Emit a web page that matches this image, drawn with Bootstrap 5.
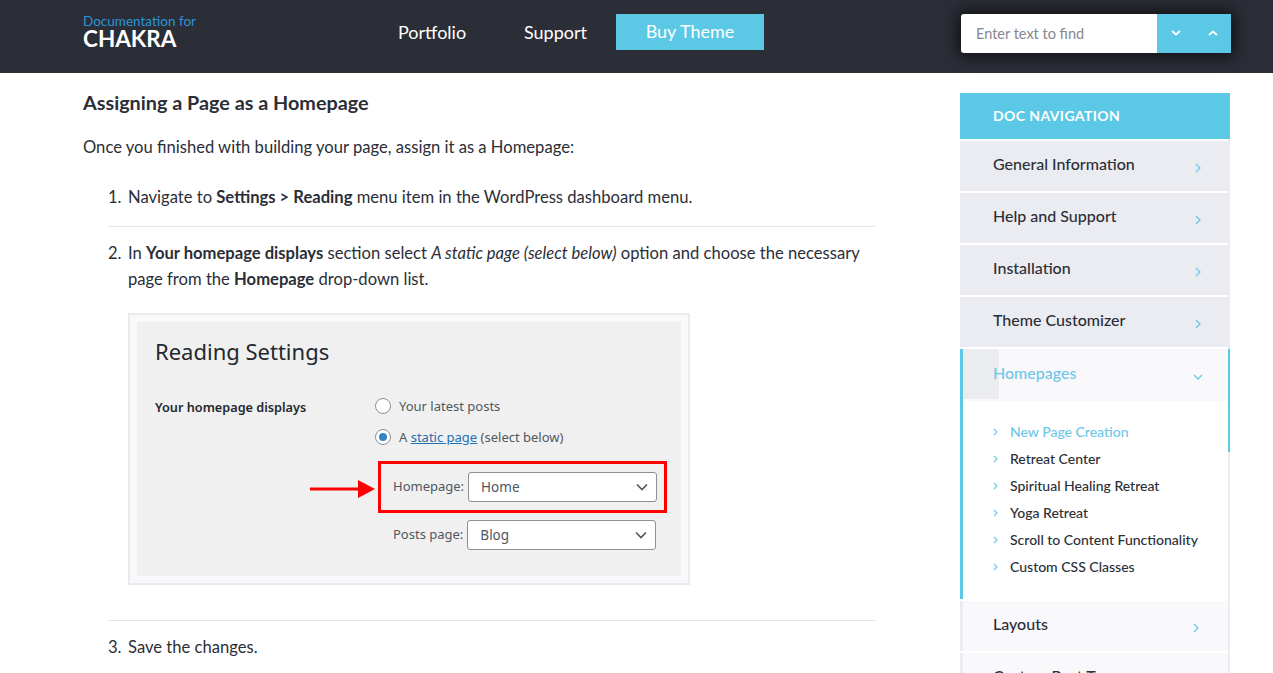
<!DOCTYPE html>
<html lang="en">
<head>
<meta charset="utf-8">
<title>Chakra Documentation</title>
<link href="https://cdn.jsdelivr.net/npm/bootstrap@5.3.0/dist/css/bootstrap.min.css" rel="stylesheet">
<style>
html,body{height:673px;overflow:hidden}
body{font-family:"Lato","Noto Sans",sans-serif;color:#2b2e37;background:#fff;font-size:16px}
.top-bar{height:73px;background:#2b2e37;flex-wrap:nowrap}
.top-inner{padding-left:83px;margin-top:-10px}
.brand-box{width:315px;line-height:1;margin-top:0}
.brand-small{color:#2b93d8;font-size:13.500px;line-height:13px;display:block}
.brand-big{color:#fff;font-size:22.500px;font-weight:700;line-height:21px;display:block}
.top-links{height:36px;width:366px}
.top-links .nav-link{color:#fff;font-size:18px;padding:0;line-height:32px}
.link-a{width:126px}
.link-b{width:92px}
.buy-btn{background:#5bc8e6;color:#fff;width:148px;height:36px;line-height:34px;font-size:18px;border:0;border-radius:0;padding:0}
.find-box{width:270px;height:39px;box-shadow:0 0 16px 3px rgba(0,0,0,.7);border-radius:3px 0 0 3px;margin-left:197px;margin-top:3px}
.find-box input{border:0;border-radius:3px 0 0 3px;height:39px;font-size:14.500px;padding:0 15px;color:#6c757d;width:196px;flex:none}
.find-box input::placeholder{color:#85878d}
.find-btn{background:#5bc8e6;width:37px;height:39px;border:0;border-radius:0;padding:0;display:flex;align-items:center;justify-content:center}
.page-wrap{padding:19px 43px 0 83px;gap:85px}
.doc-col{width:792px;flex:none}
.doc-col h4{font-size:19.800px;font-weight:700;line-height:20px;margin:0 0 25px;color:#2b2e37}
.doc-col p{font-size:16.600px;line-height:20px;margin:0 0 27px}
.step-list{padding-left:25px;list-style:none;margin:0}
.step-item{display:flex;font-size:16.600px;line-height:26px}
.step-num{width:20px;flex:none}
.step-rule{border-top:1px solid #e6e6ea;height:0}
.shot-frame{width:562px;height:272px;border:2px solid #ebebee;background:#f9f9fb;padding:7px;margin:21px 0 35px}
.shot-panel{background:#f0f0f1;height:254px;padding:13px 18px;color:#50575e;font-family:"Noto Sans",sans-serif;font-size:13px;position:relative}
.shot-title{font-size:22px;line-height:32px;color:#23282d;margin-bottom:30px}
.shot-label{width:220px;font-weight:600;font-size:12.700px;color:#23282d;line-height:20px;flex:none}
.shot-opts{margin-top:-1px}
.shot-opt{gap:8px;height:20px;line-height:20px;margin-bottom:11px}
.shot-radio{width:16px;height:16px;border:1px solid #8c8f94;border-radius:50%;background:#fff;display:flex;align-items:center;justify-content:center;flex:none}
.shot-dot{width:8px;height:8px;border-radius:50%;background:#3582c4}
.shot-link{color:#2271b1;text-decoration:underline}
.red-box{border:3px solid #f00;width:289px;height:52px;margin:14px 0 7px 3px;padding:8px 7px 0 12px;position:relative;gap:4px}
.red-arrow{position:absolute;left:-71px;top:16px}
.label-text{line-height:20px;white-space:nowrap;margin-top:4px}
.post-row{margin-left:18px;gap:4px;width:263px}
.fake-select{width:189px;height:30px;border:1px solid #8c8f94;border-radius:3px;background:#fff;padding:0 8px 0 12px;font-size:13.500px;line-height:31px;flex:none;justify-content:space-between;align-items:center}
.side-col{width:270px;flex:none;margin-top:1px}
.side-head{height:46px;background:#5bc8e6;color:#fff;font-weight:700;font-size:14px;letter-spacing:.4px;line-height:46px;padding-left:33px}
.side-nav{border-radius:0;gap:2px;padding-top:2px;border-right:2px solid #ececf1}
.side-nav .list-group-item{border:0;border-radius:0;background:#ebecf1;height:50px;padding:0 29px 0 33px;color:#2b2e37;font-size:16px;font-weight:500;line-height:48px}
.side-label{margin-top:-4px}
.side-arrow{margin-top:3px}
.side-top{border-right:2px solid #5bc8e6;margin-right:-2px}
.side-nav .plain-item{background:#f9f9fc;border-left:3px solid #ececf1;padding-left:30px}
.side-nav .open-item{background:#f9f9fc;height:52px;padding:0 25px 0 30px;color:#6ec6e8;position:relative}
.open-wrap{border-left:3px solid #5bc8e6;height:250px;background:#fff;position:relative}
.open-wrap::after{content:"";position:absolute;right:-2px;top:0;height:103px;border-right:2px solid #5bc8e6}
.open-tab{position:absolute;left:0;top:0;width:36px;height:50px;background:#ebecf0;z-index:1}
.open-text{position:relative;z-index:2}
.sub-list{padding:17px 0 0 30px;list-style:none;margin:0}
.sub-list li{height:27px;line-height:27px;font-size:14px;font-weight:500;color:#2b2e37;display:flex;align-items:center;gap:12px}
.sub-list li.now{color:#6ec6e8}
</style>
</head>
<body>
<nav class="navbar top-bar p-0">
  <div class="d-flex align-items-center w-100 top-inner">
    <a class="brand-box text-decoration-none" href="#"><span class="brand-small">Documentation for</span><span class="brand-big">CHAKRA</span></a>
    <div class="nav top-links align-items-center flex-nowrap">
      <a class="nav-link link-a" href="#">Portfolio</a>
      <a class="nav-link link-b" href="#">Support</a>
      <a class="btn buy-btn" href="#">Buy Theme</a>
    </div>
    <div class="find-box d-flex">
      <input class="form-control" type="text" placeholder="Enter text to find">
      <button class="btn find-btn" type="button" aria-label="Next"><svg width="10" height="6" viewBox="0 0 10 6"><path d="M1 1l4 3.5L9 1" fill="none" stroke="#fff" stroke-width="1.700"/></svg></button>
      <button class="btn find-btn" type="button" aria-label="Previous"><svg width="10" height="6" viewBox="0 0 10 6"><path d="M1 5l4-3.500L9 5" fill="none" stroke="#fff" stroke-width="1.700"/></svg></button>
    </div>
  </div>
</nav>
<div class="page-wrap d-flex">
  <main class="doc-col">
    <h4>Assigning a Page as a Homepage</h4>
    <p>Once you finished with building your page, assign it as a Homepage:</p>
    <ol class="step-list">
      <li class="step-item" style="padding-bottom:16px"><span class="step-num">1.</span><span>Navigate to <b>Settings &gt; Reading</b> menu item in the WordPress dashboard menu.</span></li>
      <li class="step-rule"></li>
      <li class="step-item" style="padding-top:13px"><span class="step-num">2.</span>
        <div>
          <div>In <b>Your homepage displays</b> section select <i>A static page (select below)</i> option and choose the necessary page from the <b>Homepage</b> drop-down list.</div>
          <div class="shot-frame">
            <div class="shot-panel">
              <div class="shot-title">Reading Settings</div>
              <div class="d-flex">
                <div class="shot-label">Your homepage displays</div>
                <div class="shot-opts">
                  <div class="d-flex align-items-center shot-opt"><span class="shot-radio"></span><span>Your latest posts</span></div>
                  <div class="d-flex align-items-center shot-opt"><span class="shot-radio"><span class="shot-dot"></span></span><span>A <span class="shot-link">static page</span> (select below)</span></div>
                  <div class="red-box d-flex align-items-start">
                    <svg class="red-arrow" width="66" height="18" viewBox="0 0 66 18"><path d="M0 7.500h50v3H0z" fill="#f00"/><path d="M48 0l17 9-17 9z" fill="#f00"/></svg>
                    <span class="label-text">Homepage:</span>
                    <span class="fake-select d-flex"><span>Home</span><svg width="12" height="8" viewBox="0 0 12 8"><path d="M1 1.500l5 5 5-5" fill="none" stroke="#50575e" stroke-width="1.600"/></svg></span>
                  </div>
                  <div class="post-row d-flex align-items-start">
                    <span class="label-text">Posts page:</span>
                    <span class="fake-select d-flex"><span>Blog</span><svg width="12" height="8" viewBox="0 0 12 8"><path d="M1 1.500l5 5 5-5" fill="none" stroke="#50575e" stroke-width="1.600"/></svg></span>
                  </div>
                </div>
              </div>
            </div>
          </div>
        </div>
      </li>
      <li class="step-rule"></li>
      <li class="step-item" style="padding-top:13px"><span class="step-num">3.</span><span>Save the changes.</span></li>
    </ol>
  </main>
  <aside class="side-col">
    <div class="side-head">DOC NAVIGATION</div>
    <div class="list-group side-nav">
      <a class="list-group-item d-flex justify-content-between align-items-center side-top" href="#"><span class="side-label">General Information</span><svg class="side-arrow" width="6" height="10" viewBox="0 0 6 10"><path d="M1 1l4 4-4 4" fill="none" stroke="#6ec6e8" stroke-width="1.300"/></svg></a>
      <a class="list-group-item d-flex justify-content-between align-items-center side-top" href="#"><span class="side-label">Help and Support</span><svg class="side-arrow" width="6" height="10" viewBox="0 0 6 10"><path d="M1 1l4 4-4 4" fill="none" stroke="#6ec6e8" stroke-width="1.300"/></svg></a>
      <a class="list-group-item d-flex justify-content-between align-items-center side-top" href="#"><span class="side-label">Installation</span><svg class="side-arrow" width="6" height="10" viewBox="0 0 6 10"><path d="M1 1l4 4-4 4" fill="none" stroke="#6ec6e8" stroke-width="1.300"/></svg></a>
      <a class="list-group-item d-flex justify-content-between align-items-center side-top" href="#"><span class="side-label">Theme Customizer</span><svg class="side-arrow" width="6" height="10" viewBox="0 0 6 10"><path d="M1 1l4 4-4 4" fill="none" stroke="#6ec6e8" stroke-width="1.300"/></svg></a>
      <div class="open-wrap">
        <span class="open-tab"></span>
        <a class="list-group-item open-item d-flex justify-content-between align-items-center" href="#"><span class="open-text side-label">Homepages</span><svg class="side-arrow" width="10" height="6" viewBox="0 0 10 6"><path d="M1 1l4 4 4-4" fill="none" stroke="#6ec6e8" stroke-width="1.300"/></svg></a>
        <ul class="sub-list">
          <li class="now"><svg width="5" height="8" viewBox="0 0 5 8"><path d="M1 1l3 3-3 3" fill="none" stroke="#6ec6e8" stroke-width="1.100"/></svg>New Page Creation</li>
          <li><svg width="5" height="8" viewBox="0 0 5 8"><path d="M1 1l3 3-3 3" fill="none" stroke="#6ec6e8" stroke-width="1.100"/></svg>Retreat Center</li>
          <li><svg width="5" height="8" viewBox="0 0 5 8"><path d="M1 1l3 3-3 3" fill="none" stroke="#6ec6e8" stroke-width="1.100"/></svg>Spiritual Healing Retreat</li>
          <li><svg width="5" height="8" viewBox="0 0 5 8"><path d="M1 1l3 3-3 3" fill="none" stroke="#6ec6e8" stroke-width="1.100"/></svg>Yoga Retreat</li>
          <li><svg width="5" height="8" viewBox="0 0 5 8"><path d="M1 1l3 3-3 3" fill="none" stroke="#6ec6e8" stroke-width="1.100"/></svg>Scroll to Content Functionality</li>
          <li><svg width="5" height="8" viewBox="0 0 5 8"><path d="M1 1l3 3-3 3" fill="none" stroke="#6ec6e8" stroke-width="1.100"/></svg>Custom CSS Classes</li>
        </ul>
      </div>
      <a class="list-group-item plain-item d-flex justify-content-between align-items-center" href="#"><span class="side-label">Layouts</span><svg class="side-arrow" width="6" height="10" viewBox="0 0 6 10"><path d="M1 1l4 4-4 4" fill="none" stroke="#6ec6e8" stroke-width="1.300"/></svg></a>
      <a class="list-group-item plain-item d-flex justify-content-between align-items-center" href="#"><span class="side-label">Custom Post Types</span><svg class="side-arrow" width="6" height="10" viewBox="0 0 6 10"><path d="M1 1l4 4-4 4" fill="none" stroke="#6ec6e8" stroke-width="1.300"/></svg></a>
    </div>
  </aside>
</div>
</body>
</html>
